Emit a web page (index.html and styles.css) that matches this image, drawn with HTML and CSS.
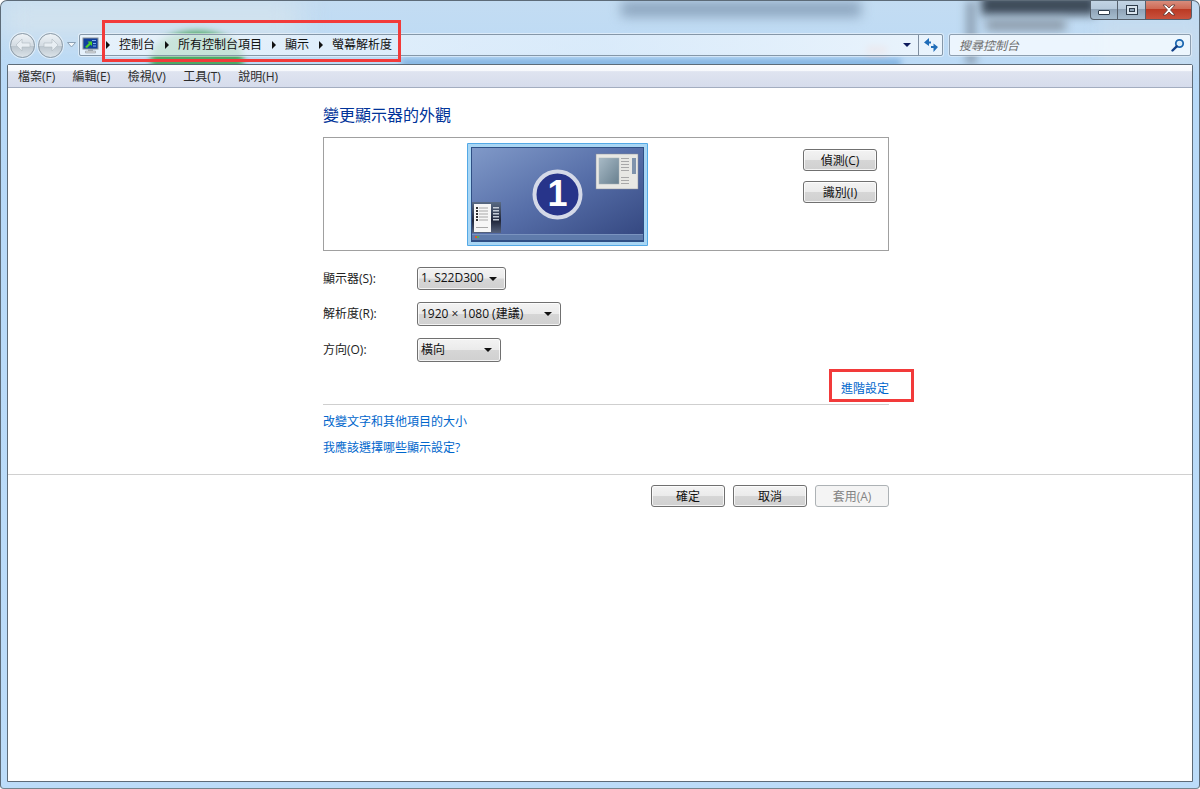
FILE: index.html
```html
<!DOCTYPE html>
<html lang="zh-Hant">
<head>
<meta charset="utf-8">
<title>螢幕解析度</title>
<link rel="stylesheet" href="styles.css">
</head>
<body>
<div class="window">
  <div class="aero">
    <i class="blob b1"></i><i class="blob b2"></i><i class="blob b3"></i><i class="blob b4"></i><i class="blob b5"></i><i class="blob b6"></i><i class="blob b7"></i><i class="blob b8"></i><i class="blob b9"></i>
  </div>
  <div class="caption">
    <div class="capbtn cmin"><span class="minbar"></span></div>
    <div class="capbtn cmax"><span class="maxbox"></span></div>
    <div class="capbtn cclose">
      <svg width="16" height="12" viewBox="0 0 16 12"><path d="M2 1h3l3 3 3-3h3l-4.500 5 4.500 5h-3l-3-3-3 3H2l4.500-5z" fill="#fff" stroke="#5d3a35" stroke-width=".8"/></svg>
    </div>
  </div>
  <div class="navrow">
    <div class="navbtns">
      <div class="round"><svg width="16" height="14" viewBox="0 0 16 14"><path d="M1 7l6-6v4h8v4H7v4z" fill="#e8eef3" stroke="#aeb8c0" stroke-width=".6"/></svg></div>
      <div class="round"><svg width="16" height="14" viewBox="0 0 16 14"><path d="M15 7L9 1v4H1v4h8v4z" fill="#e8eef3" stroke="#aeb8c0" stroke-width=".6"/></svg></div>
      <svg class="histarrow" width="9" height="6" viewBox="0 0 9 6"><path d="M.5.500h8L4.500 5z" fill="#f4f8fb" stroke="#8ba0b4"/></svg>
    </div>
    <div class="address">
      <svg class="cpicon" width="17" height="17" viewBox="0 0 17 17">
        <rect x="1" y="1" width="15" height="11" fill="#11409c" stroke="#8a929a"/>
        <path d="M3 10l4-4-1.500-1.500H10V9L8.500 7.500 5 11z" fill="#4fd02b"/>
        <path d="M10 3h4v1h-4zM11 6h3v1h-3zM11 8.500h3v1h-3z" fill="#7fb0ef"/>
        <path d="M6 12h5v2H6z" fill="#a8b0b6"/><path d="M3.500 14h10v2h-10z" fill="#d3d7da" stroke="#8a929a" stroke-width=".5"/>
      </svg>
      <div class="crumbs">
        <span class="sep"></span><span class="crumb">控制台</span>
        <span class="sep"></span><span class="crumb">所有控制台項目</span>
        <span class="sep"></span><span class="crumb">顯示</span>
        <span class="sep"></span><span class="crumb">螢幕解析度</span>
      </div>
      <span class="addrdrop"></span>
      <div class="refresh">
        <svg width="16" height="16" viewBox="0 0 16 16">
          <path d="M6 1L1 5.500 6 9V6.500h2v-2H6z" fill="#1f6cb8"/>
          <path d="M10.500 15l4.500-5-4.500-3.500V9H8v2h2.500z" fill="#1f6cb8"/>
        </svg>
      </div>
    </div>
    <div class="search">
      <span class="searchtext">搜尋控制台</span>
      <svg width="14" height="14" viewBox="0 0 14 14">
        <circle cx="8.500" cy="5.500" r="3.700" fill="#dcecf8" stroke="#1b66b0" stroke-width="1.800"/>
        <path d="M5.700 8.300L1.500 12.500" stroke="#123f86" stroke-width="2.400" stroke-linecap="round"/>
      </svg>
    </div>
  </div>
  <div class="client">
    <div class="menubar">
      <span class="menuitem">檔案(F)</span>
      <span class="menuitem">編輯(E)</span>
      <span class="menuitem">檢視(V)</span>
      <span class="menuitem">工具(T)</span>
      <span class="menuitem">說明(H)</span>
    </div>
    <div class="page">
      <div class="column">
        <h1 class="heading">變更顯示器的外觀</h1>
        <div class="preview">
          <div class="monitorwrap">
            <svg width="181" height="103" viewBox="0 0 181 103">
              <defs>
                <linearGradient id="desk" x1="0" y1="0" x2="1" y2="1">
                  <stop offset="0" stop-color="#8099c8"/><stop offset=".5" stop-color="#566ea8"/><stop offset="1" stop-color="#33467f"/>
                </linearGradient>
                <linearGradient id="scr" x1="0" y1="0" x2="1" y2="1">
                  <stop offset="0" stop-color="#a8bac6"/><stop offset="1" stop-color="#68808f"/>
                </linearGradient>
                <linearGradient id="side" x1="0" y1="0" x2="0" y2="1">
                  <stop offset="0" stop-color="#5a6b85"/><stop offset=".6" stop-color="#20263a"/><stop offset="1" stop-color="#56627c"/>
                </linearGradient>
              </defs>
              <rect x="0" y="0" width="181" height="103" rx="1" fill="#53a9e6"/>
              <rect x="1" y="1" width="179" height="101" fill="#a9d6f4"/>
              <rect x="4" y="4" width="173" height="95" fill="#2f4f85"/>
              <rect x="5" y="5" width="171" height="92" fill="url(#desk)"/>
              <rect x="5" y="91" width="171" height="6" fill="#5f7bab"/>
              <rect x="5" y="91" width="171" height="1" fill="#7a93bf"/>
              <rect x="8" y="93" width="2" height="2" fill="#e2552b"/><rect x="10" y="93" width="2" height="2" fill="#55b04a"/>
              <rect x="129" y="11" width="42" height="35" fill="#e8e8e4" stroke="#8a8f98" stroke-width=".5"/>
              <rect x="132" y="15" width="20" height="26" fill="url(#scr)" stroke="#a8b2b8" stroke-width=".5"/>
              <rect x="165" y="15" width="4" height="16" fill="#7f93ac"/>
              <path d="M154 15h8v1h-8zM154 18h8v1h-8zM154 21h8v1h-8zM154 24h8v1h-8zM154 27h8v1h-8zM154 34h8v1h-8zM154 37h8v1h-8zM154 40h8v1h-8z" fill="#a8a8a8"/>
              <rect x="5" y="59" width="29" height="31" fill="url(#side)"/>
              <rect x="7" y="61" width="17" height="28" fill="#f6f6f6"/>
              <path d="M9 64h2v2H9zM9 67h2v2H9zM9 70h2v2H9zM9 73h2v2H9zM9 76h2v2H9z" fill="#333"/>
              <path d="M12 64.500h9v1h-9zM12 67.500h9v1h-9zM12 70.500h9v1h-9zM12 73.500h9v1h-9zM12 76.500h9v1h-9zM9 84h12v1H9z" fill="#a8a8a8"/>
              <path d="M26 64h6v1.500h-6zM26 67h6v1.500h-6zM26 70h6v1.500h-6zM26 73h6v1.500h-6zM26 76h6v1.500h-6z" fill="#c4cbd6"/>
              <circle cx="90.500" cy="51.500" r="23" fill="#27348a" stroke="#d4d9e8" stroke-width="4"/>
            </svg>
            <span class="monitornum">1</span>
          </div>
          <div class="previewbtns">
            <button class="btn">偵測(C)</button>
            <button class="btn">識別(I)</button>
          </div>
        </div>
        <div class="field">
          <label class="fieldlabel">顯示器(S):</label>
          <div class="select sel1"><span>1. S22D300</span><i class="caret"></i></div>
        </div>
        <div class="field">
          <label class="fieldlabel">解析度(R):</label>
          <div class="select sel2"><span>1920 × 1080 (建議)</span><i class="caret"></i></div>
        </div>
        <div class="field">
          <label class="fieldlabel">方向(O):</label>
          <div class="select sel3"><span>橫向</span><i class="caret"></i></div>
        </div>
        <div class="advrow"><a class="link adv">進階設定</a></div>
        <div class="links">
          <a class="link">改變文字和其他項目的大小</a>
          <a class="link">我應該選擇哪些顯示設定?</a>
        </div>
      </div>
      <div class="footer">
        <div class="footerbtns">
          <button class="btn">確定</button>
          <button class="btn">取消</button>
          <button class="btn disabled">套用(A)</button>
        </div>
      </div>
    </div>
  </div>
  <div class="mark mark1"></div>
  <div class="mark mark2"></div>
</div>
</body>
</html>
```

FILE: styles.css
```css
* { box-sizing: border-box; }
html, body { margin: 0; height: 100%; }
body {
  font-family: "Open Sans", "Noto Sans CJK TC", "Liberation Sans", sans-serif;
  font-size: 12px;
  color: #1a1a1a;
  overflow: hidden;
}
.window {
  position: relative;
  width: 1200px;
  height: 789px;
  padding: 0 6px 6px;
  display: flex;
  flex-direction: column;
  background: linear-gradient(180deg, #c3dcf2 0, #b7d9f8 100px, #bcdcf9 100%);
  border: 1px solid #5d6b78;
  border-bottom-color: #76858f;
  border-radius: 7px 7px 4px 4px;
  overflow: hidden;
}
.aero { position: absolute; inset: 0; overflow: hidden; }
.blob { position: absolute; display: block; filter: blur(7px); }
.b1 { left: 0; top: 0; width: 300px; height: 36px; background: #d3e3ee; filter: blur(14px); }
.b2 { left: 150px; top: 30px; width: 92px; height: 50px; background: #4ea866; border-radius: 50% 50% 0 0; filter: blur(3px); }
.b3 { left: 980px; top: -6px; width: 115px; height: 20px; background: #3d4a58; filter: blur(5px); }
.b4 { left: 985px; top: 18px; width: 80px; height: 12px; background: #8d9cab; filter: blur(5px); }
.b5 { left: 965px; top: 0; width: 10px; height: 64px; background: #8fa3b6; filter: blur(4px); }
.b6 { left: 620px; top: 0; width: 240px; height: 16px; background: #8ea7c0; filter: blur(6px); }
.b7 { left: 1100px; top: 20px; width: 100px; height: 44px; background: #c7dcee; filter: blur(8px); }
.b8 { left: 400px; top: 58px; width: 500px; height: 8px; background: #7eb0e0; filter: blur(3px); }
.b9 { left: 866px; top: 45px; width: 20px; height: 8px; background: #d9a3a0; filter: blur(3px); }
.caption {
  position: relative;
  height: 20px;
  margin-right: 1px;
  display: flex;
  justify-content: flex-end;
  flex: none;
}
.capbtn {
  height: 20px;
  margin-top: -1px;
  display: flex;
  align-items: center;
  justify-content: center;
  border: 1px solid #56606c;
  border-top: 0;
  border-left-width: 0;
  background: linear-gradient(180deg, #c4d5e5 0, #b6c9db 45%, #8fa3b7 50%, #a6bccf 100%);
}
.cmin { width: 28px; border-left-width: 1px; border-bottom-left-radius: 4px; }
.cmax { width: 28px; }
.cclose { width: 46px; border-bottom-right-radius: 4px; background: linear-gradient(180deg, #d99181 0, #cf6a55 45%, #bb3a24 50%, #c9523d 100%); }
.minbar { width: 12px; height: 5px; margin-top: 5px; border: 1px solid #2f3d4c; background: #fff; border-radius: 1px; }
.maxbox { width: 12px; height: 10px; border: 1px solid #2f3d4c; box-shadow: inset 0 0 0 2px #d9e4ee, inset 0 0 0 3px #2f3d4c; }
.navrow {
  position: relative;
  flex: none;
  height: 43px;
  display: flex;
  align-items: flex-start;
  padding-top: 13px;
}
.navbtns { width: 72px; padding-left: 3px; display: flex; align-items: center; flex: none; height: 22px; }
.round {
  width: 25px;
  height: 25px;
  margin-right: 3px;
  flex: none;
  border-radius: 50%;
  display: flex;
  align-items: center;
  justify-content: center;
  background: linear-gradient(180deg, #eef3f7 0, #d4dce3 50%, #bcc6ce 52%, #dbe3e9 100%);
  border: 1px solid #8d9aa5;
  box-shadow: 0 0 0 1px rgba(255, 255, 255, .5);
}
.histarrow { margin-left: 1px; flex: none; }
.address {
  flex: none;
  width: 864px;
  height: 22px;
  display: flex;
  align-items: center;
  background: linear-gradient(90deg, rgba(238, 246, 253, .8), rgba(232, 243, 253, .65) 60%, rgba(238, 246, 253, .9));
  border: 1px solid #8597a8;
  border-radius: 2px;
  box-shadow: 0 0 0 1px rgba(255, 255, 255, .45);
}
.cpicon { margin-left: 2px; flex: none; }
.crumbs { display: flex; align-items: center; flex: 1; margin-left: 7px; color: #111; }
.crumb { margin: 0 10px 0 9px; line-height: 20px; white-space: nowrap; }
.sep { width: 0; height: 0; border-left: 4px solid #111; border-top: 4px solid transparent; border-bottom: 4px solid transparent; flex: none; }
.addrdrop { width: 0; height: 0; margin-right: 7px; border-top: 4px solid #0c1a5c; border-left: 4px solid transparent; border-right: 4px solid transparent; flex: none; }
.refresh { width: 24px; height: 20px; border-left: 1px solid #7e8ea0; display: flex; align-items: center; justify-content: center; flex: none; }
.search {
  flex: none;
  width: 242px;
  height: 22px;
  margin-left: 6px;
  display: flex;
  align-items: center;
  justify-content: space-between;
  padding: 0 5px 0 9px;
  background: rgba(240, 247, 254, .92);
  border: 1px solid #8e9fb0;
  border-radius: 2px;
  box-shadow: 0 0 0 1px rgba(255, 255, 255, .35);
}
.searchtext { color: #6d6d6d; font-style: italic; }
.client {
  position: relative;
  flex: 1;
  min-height: 0;
  display: flex;
  flex-direction: column;
  background: #fff;
  border: 1px solid #5d6b78;
  border-radius: 2px 2px 0 0;
}
.menubar {
  flex: none;
  height: 23px;
  display: flex;
  align-items: center;
  padding: 2px 0 0 10px;
  gap: 17.300px;
  color: #2c2c2c;
  background: linear-gradient(180deg, #fbfcfe 0, #f6f8fc 27%, #dfe4f0 30%, #d6dcec 100%);
  border-bottom: 1px solid #a3adc0;
}
.menuitem { line-height: 20px; white-space: nowrap; }
.page { flex: 1; display: flex; flex-direction: column; }
.column { width: 566px; margin-left: 315px; }
.heading { margin: 0; padding-top: 15px; height: 49px; font-size: 16px; font-weight: 400; line-height: 24px; color: #003399; }
.preview {
  position: relative;
  height: 114px;
  border: 1px solid #a0a0a0;
  display: flex;
  padding: 5px 11px 0 143px;
  justify-content: space-between;
}
.monitorwrap { position: relative; width: 181px; height: 103px; }
.monitorwrap svg { display: block; }
.monitornum {
  position: absolute;
  left: 0;
  right: 0;
  top: 27px;
  text-align: center;
  font: 700 36px/48px "Liberation Sans", sans-serif;
  color: #fff;
}
.previewbtns { display: flex; flex-direction: column; gap: 10px; padding-top: 6px; }
.btn {
  width: 74px;
  height: 22px;
  padding: 0;
  font: inherit;
  color: #111;
  border: 1px solid #707070;
  border-radius: 3px;
  background: linear-gradient(180deg, #f3f3f3 0, #ebebeb 48%, #d6d6d6 52%, #d0d0d0 100%);
  box-shadow: inset 0 0 0 1px rgba(255, 255, 255, .75);
}
.btn.disabled { color: #838383; background: #f4f4f4; border-color: #adb2b5; box-shadow: none; }
.field { display: flex; align-items: center; height: 24px; margin-top: 12px; }
.preview + .field { margin-top: 16px; }
.field:nth-of-type(3) { margin-top: 11px; }
.fieldlabel { width: 94px; flex: none; color: #222; padding-bottom: 2px; }
.select {
  height: 24px;
  display: flex;
  align-items: center;
  justify-content: space-between;
  padding: 0 8px 2px 3px;
  color: #111;
  border: 1px solid #707070;
  border-radius: 3px;
  background: linear-gradient(180deg, #f3f3f3 0, #ebebeb 48%, #d6d6d6 52%, #d0d0d0 100%);
  box-shadow: inset 0 0 0 1px rgba(255, 255, 255, .75);
}
.sel1 { width: 89px; height: 23px; align-self: flex-start; }
.sel2 { width: 144px; }
.sel3 { width: 84px; }
.caret { width: 0; height: 0; margin-top: 2px; border-top: 4px solid #111; border-left: 4px solid transparent; border-right: 4px solid transparent; }
.link { display: block; color: #0066cc; line-height: 18px; white-space: nowrap; }
.advrow { display: flex; justify-content: flex-end; height: 43px; padding-top: 18px; border-bottom: 1px solid #cfcfcf; }
.links { display: flex; flex-direction: column; gap: 8px; padding-top: 8px; }
.footer { margin-top: 17px; border-top: 1px solid #d0d0d0; padding: 10px 0 0 0; }
.footerbtns { width: 566px; margin-left: 315px; display: flex; justify-content: flex-end; gap: 8px; }
.mark { position: absolute; border: 3px solid #f23a3a; }
.mark1 { left: 101px; top: 19px; width: 299px; height: 42px; }
.mark2 { left: 828px; top: 368px; width: 85px; height: 33px; }
```
